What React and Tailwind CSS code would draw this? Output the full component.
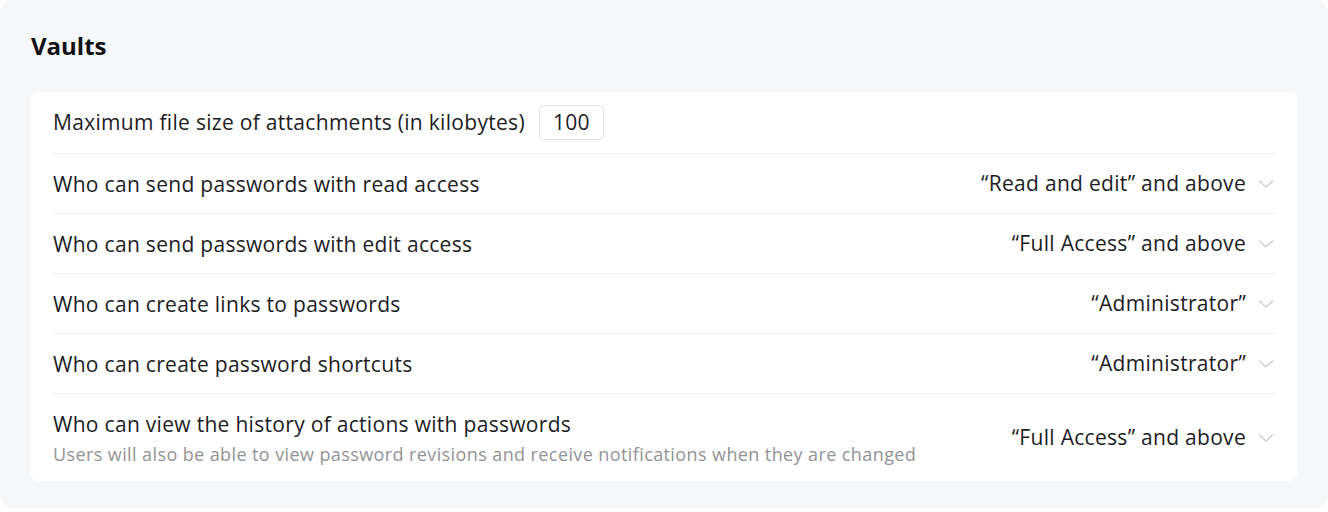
import React from 'react'

const rows = [
  { label: 'Who can send passwords with read access', value: '“Read and edit” and above' },
  { label: 'Who can send passwords with edit access', value: '“Full Access” and above' },
  { label: 'Who can create links to passwords', value: '“Administrator”' },
  { label: 'Who can create password shortcuts', value: '“Administrator”' },
  {
    label: 'Who can view the history of actions with passwords',
    hint: 'Users will also be able to view password revisions and receive notifications when they are changed',
    value: '“Full Access” and above',
  },
]

function Chevron() {
  return (
    <svg width="16" height="10" viewBox="0 0 16 10" fill="none" className="ml-3 shrink-0">
      <path d="M1.5 2L8 8L14.5 2" stroke="#c9cbcf" strokeWidth="1.3" strokeLinecap="round" strokeLinejoin="round" />
    </svg>
  )
}

function SelectRow({ label, hint, value }) {
  return (
    <div className={`flex items-center justify-between border-t border-[#eceef1] ${hint ? 'h-[88px]' : 'h-[60px]'}`}>
      <div className="flex flex-col">
        <div className="text-[21px] tracking-[0.3px] text-[#1d1d1f] leading-[28px]">{label}</div>
        {hint && <div className="text-[18px] tracking-[0.4px] text-[#929395] leading-[24px] mt-[4px]">{hint}</div>}
      </div>
      <div className="flex items-center text-[21px] tracking-[0.3px] text-[#1d1d1f]">
        {value}
        <Chevron />
      </div>
    </div>
  )
}

export default function App() {
  return (
    <div className="w-[1328px] h-[512px] bg-white" style={{ fontFamily: '"Open Sans", sans-serif' }}>
      <div className="h-[508px] bg-[#f6f7f9] rounded-[14px] px-[30px] pt-[30px]">
        <h2 className="text-[24px] font-bold text-[#111] leading-[32px] pl-[1px]">Vaults</h2>
        <div className="mt-[30px] w-[1267px] bg-white rounded-[8px] px-[23px]">
          <div className="h-[61px] flex items-center">
            <span className="text-[21px] tracking-[0.3px] text-[#1d1d1f]">Maximum file size of attachments (in kilobytes)</span>
            <div className="ml-[14px] w-[65px] h-[35px] border border-[#dfe1e4] rounded-[5px] flex items-center justify-center text-[21px] tracking-[0.3px] text-[#1d1d1f]">
              100
            </div>
          </div>
          {rows.map(r => (
            <SelectRow key={r.label} {...r} />
          ))}
        </div>
      </div>
    </div>
  )
}
